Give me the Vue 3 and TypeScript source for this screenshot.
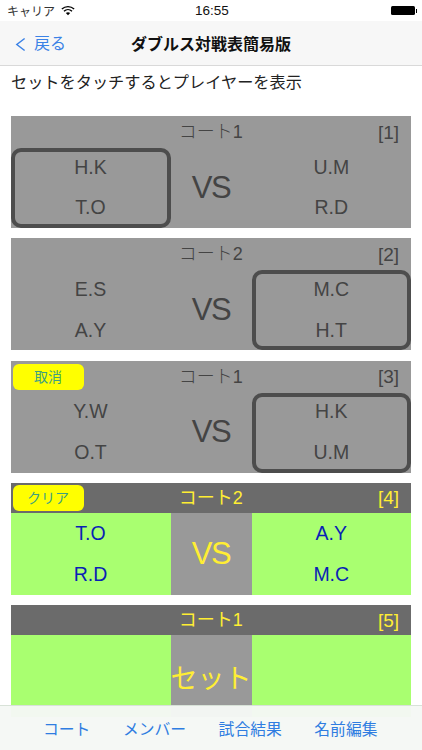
<script setup lang="ts">
interface Match {
  court: string
  no: number
  left: string[]
  right: string[]
  center: string
  active: boolean
  button?: string
  selected?: 'left' | 'right'
}

const matches: Match[] = [
  { court: 'コート1', no: 1, left: ['H.K', 'T.O'], right: ['U.M', 'R.D'], center: 'VS', active: false, selected: 'left' },
  { court: 'コート2', no: 2, left: ['E.S', 'A.Y'], right: ['M.C', 'H.T'], center: 'VS', active: false, selected: 'right' },
  { court: 'コート1', no: 3, left: ['Y.W', 'O.T'], right: ['H.K', 'U.M'], center: 'VS', active: false, button: '取消', selected: 'right' },
  { court: 'コート2', no: 4, left: ['T.O', 'R.D'], right: ['A.Y', 'M.C'], center: 'VS', active: true, button: 'クリア' },
  { court: 'コート1', no: 5, left: [], right: [], center: 'セット', active: true },
]

const tabs = ['コート', 'メンバー', '試合結果', '名前編集']
</script>

<template>
  <div class="page">
    <div class="status">
      <div class="status-left">
        <span>キャリア</span>
        <svg class="wifi" viewBox="0 0 16 12" width="14" height="11">
          <path d="M1 4.4C5 .6 11 .6 15 4.4" fill="none" stroke="#000" stroke-width="1.6" />
          <path d="M3.4 6.8C6 4.4 10 4.4 12.6 6.8" fill="none" stroke="#000" stroke-width="1.6" />
          <path d="M8 11.5 5.5 8.9C7 7.7 9 7.7 10.5 8.9Z" fill="#000" />
        </svg>
      </div>
      <div class="clock">16:55</div>
      <div class="battery"><span class="battery-body"></span><span class="battery-tip"></span></div>
    </div>

    <header class="nav">
      <div class="back">
        <svg viewBox="0 0 12 16" width="11" height="15">
          <path d="M10.5 1.5 2 8l8.5 6.5" fill="none" stroke="#3b82e6" stroke-width="1.6" />
        </svg>
        <span>戻る</span>
      </div>
      <h1 class="title">ダブルス対戦表簡易版</h1>
    </header>

    <p class="hint">セットをタッチするとプレイヤーを表示</p>

    <main class="list">
      <section v-for="m in matches" :key="m.no" class="card" :class="{ active: m.active }">
        <div class="head">
          <div class="head-side">
            <button v-if="m.button" class="action" type="button">{{ m.button }}</button>
          </div>
          <div class="court">{{ m.court }}</div>
          <div class="head-side no">[{{ m.no }}]</div>
        </div>
        <div class="body">
          <div class="team" :class="{ selected: m.selected === 'left' }">
            <span v-for="p in m.left" :key="p">{{ p }}</span>
          </div>
          <div class="center" :class="{ set: m.center !== 'VS' }">{{ m.center }}</div>
          <div class="team" :class="{ selected: m.selected === 'right' }">
            <span v-for="p in m.right" :key="p">{{ p }}</span>
          </div>
        </div>
      </section>
    </main>

    <nav class="tabs">
      <span v-for="t in tabs" :key="t">{{ t }}</span>
    </nav>
  </div>
</template>

<style>
html, body { margin: 0; padding: 0; background: #fff; }
</style>

<style scoped>
.page {
  position: relative;
  width: 422px;
  height: 750px;
  overflow: hidden;
  background: #fff;
  font-family: "Liberation Sans", "Noto Sans CJK JP", sans-serif;
  color: #000;
}
.status {
  height: 21px;
  display: grid;
  grid-template-columns: 1fr auto 1fr;
  align-items: center;
  padding: 0 5px 0 7px;
  font-size: 12px;
  background: #fff;
}
.status-left { display: flex; align-items: center; gap: 6px; color: #333; }
.wifi { display: block; }
.clock { font-size: 13.5px; color: #111; }
.battery { justify-self: end; display: flex; align-items: center; }
.battery-body { width: 24px; height: 9px; background: #000; border-radius: 1.5px; }
.battery-tip { width: 1.5px; height: 4px; background: #000; margin-left: 1px; }
.nav {
  position: relative;
  height: 44px;
  display: flex;
  align-items: center;
  justify-content: center;
  background: #f7f7f7;
  border-bottom: 1px solid #d9d9d9;
}
.back {
  position: absolute;
  left: 15px;
  top: 12px;
  display: flex;
  align-items: center;
  gap: 8px;
  color: #3b82e6;
  font-size: 16px;
  line-height: 22px;
}
.title { margin: 0; font-size: 16px; font-weight: 700; color: #111; }
.hint {
  margin: 0;
  height: 50px;
  padding: 5px 11px 0;
  box-sizing: border-box;
  font-size: 16.2px;
  font-weight: 400;
  line-height: 22px;
  color: #222;
}
.list {
  display: flex;
  flex-direction: column;
  gap: 10.25px;
  padding: 0 11px 0 10.5px;
}
.card {
  height: 112px;
  flex: none;
  background: #999;
  display: flex;
  flex-direction: column;
  color: #444;
}
.head {
  height: 30px;
  flex: none;
  display: grid;
  grid-template-columns: 1fr auto 1fr;
  align-items: center;
}
.card.active .head { background: #6b6b6b; color: #ffee33; }
.head-side { display: flex; align-items: center; }
.court { font-size: 18px; font-weight: 300; line-height: 32px; }
.card.active .court { font-weight: 400; line-height: 30px; }
.no { justify-content: flex-end; font-size: 19px; padding: 1px 12px 0 0; }
.action {
  margin: 0 0 0 2px;
  width: 71px;
  height: 26px;
  padding: 0 0 2px;
  border: none;
  border-radius: 6px;
  background: #ffff00;
  color: #3f9f80;
  font-family: inherit;
  font-size: 14px;
}
.body {
  flex: 1;
  display: grid;
  grid-template-columns: 160px 81px 1fr;
  min-height: 0;
}
.team {
  position: relative;
  display: grid;
  grid-template-rows: 40.5px 40.5px;
  align-content: center;
  justify-items: center;
  align-items: center;
  padding-top: 1px;
  font-size: 19.5px;
}
.team.selected::after {
  content: "";
  position: absolute;
  inset: 2px 0 0 0;
  border: 4px solid #4d4d4d;
  border-radius: 10px;
}
.card.active .team { background: #a9ff70; color: #0a1fb5; padding-top: 0; }
.center {
  display: flex;
  align-items: center;
  justify-content: center;
  padding-top: 1px;
  font-size: 31px;
  letter-spacing: -1.5px;
  white-space: nowrap;
}
.card.active .center { background: #999; color: #ffee33; }
.center.set { font-size: 27px; font-weight: 400; padding-top: 0; letter-spacing: 0; }
.tabs {
  position: absolute;
  left: 0;
  right: 0;
  bottom: 0;
  height: 45px;
  box-sizing: border-box;
  display: flex;
  align-items: center;
  padding: 0 0 0 43px;
  gap: 32.5px;
  background: rgba(245, 248, 245, 0.97);
  border-top: 1px solid #d8e2d8;
  color: #2f7de1;
  font-size: 15.8px;
}
</style>
